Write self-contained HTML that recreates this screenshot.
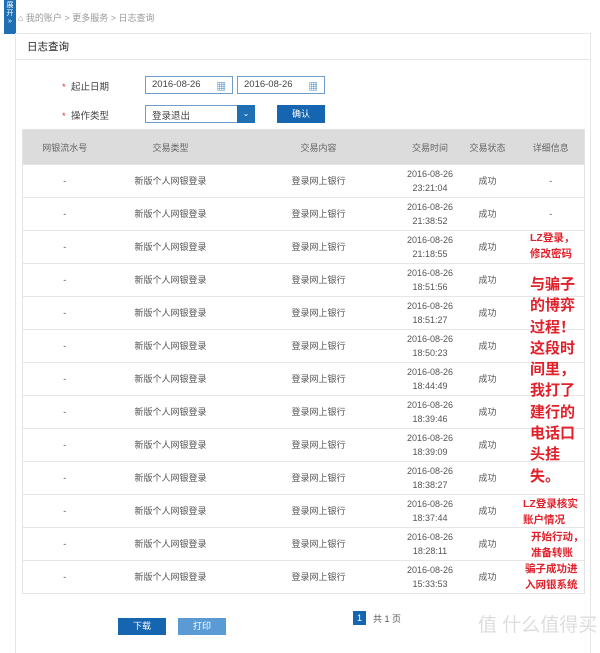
<!DOCTYPE html>
<html><head><meta charset="utf-8"><style>
*{margin:0;padding:0;box-sizing:border-box}
body{width:600px;height:641px;background:#fff;font-family:"Liberation Sans","Noto Sans CJK SC",sans-serif;font-size:9px;color:#555;position:relative;overflow:hidden}
.a{position:absolute}
.tab{left:4px;top:0;width:12px;height:34px;background:#1f6fb5;color:#fff;font-size:7px;line-height:8px;text-align:center;padding-top:2px}
.panel{left:15px;top:33px;width:576px;height:620px;border-left:1px solid #e6e6e6;border-right:1px solid #e6e6e6;border-top:1px solid #e6e6e6}
table{position:absolute;left:22px;top:129px;width:563px;border-collapse:collapse;border:1px solid #e3e3e3}
th{background:#dcdcdc;height:35px;font-weight:normal;color:#666;font-size:9px}
td{height:33px;border-top:1px solid #e6e6e6;text-align:center;font-size:9px;color:#555;line-height:14px}
.inp{border:1px solid #6f9cc8;height:18px;background:#fff;font-size:9.5px;padding:2px 6px;color:#444}
.btn{color:#fff;text-align:center;font-size:9px}
.r{color:#e0202a;font-weight:bold;position:absolute;font-size:10.5px;line-height:16px}
.big{font-size:15px;line-height:21.3px;left:530px;top:274px}
</style></head><body>
<div class="a tab">展<br>开<br>»</div>
<div class="a panel"></div>
<div class="a" style="left:18px;top:11px;font-size:9px;color:#999">⌂ 我的账户 &gt; 更多服务 &gt; 日志查询</div>
<div class="a" style="left:16px;top:59px;width:574px;border-top:1px solid #e6e6e6"></div>
<div class="a" style="left:27px;top:39px;font-size:10.5px;color:#222">日志查询</div>
<div class="a" style="left:62px;top:79px;font-size:9.5px;color:#444"><span style="color:#d33">*</span>&nbsp; 起止日期</div>
<div class="a" style="left:62px;top:108px;font-size:9.5px;color:#444"><span style="color:#d33">*</span>&nbsp; 操作类型</div>
<div class="a inp" style="left:145px;top:76px;width:88px">2016-08-26 <span style="color:#1f6fb5;float:right">▦</span></div>
<div class="a inp" style="left:237px;top:76px;width:88px">2016-08-26 <span style="color:#1f6fb5;float:right">▦</span></div>
<div class="a inp" style="left:145px;top:105px;width:110px">登录退出</div>
<div class="a btn" style="left:237px;top:105px;width:18px;height:18px;background:#1f6fb5;line-height:18px;font-size:8px">⌄</div>
<div class="a btn" style="left:277px;top:105px;width:48px;height:18px;background:#1565b0;line-height:18px">确认</div>
<table>
<tr><th style="width:84px">网银流水号</th><th style="width:128px">交易类型</th><th style="width:168px">交易内容</th><th style="width:55px">交易时间</th><th style="width:60px">交易状态</th><th>详细信息</th></tr>
<tr><td>-</td><td>新版个人网银登录</td><td>登录网上银行</td><td>2016-08-26<br>23:21:04</td><td>成功</td><td>-</td></tr>
<tr><td>-</td><td>新版个人网银登录</td><td>登录网上银行</td><td>2016-08-26<br>21:38:52</td><td>成功</td><td>-</td></tr>
<tr><td>-</td><td>新版个人网银登录</td><td>登录网上银行</td><td>2016-08-26<br>21:18:55</td><td>成功</td><td></td></tr>
<tr><td>-</td><td>新版个人网银登录</td><td>登录网上银行</td><td>2016-08-26<br>18:51:56</td><td>成功</td><td></td></tr>
<tr><td>-</td><td>新版个人网银登录</td><td>登录网上银行</td><td>2016-08-26<br>18:51:27</td><td>成功</td><td></td></tr>
<tr><td>-</td><td>新版个人网银登录</td><td>登录网上银行</td><td>2016-08-26<br>18:50:23</td><td>成功</td><td></td></tr>
<tr><td>-</td><td>新版个人网银登录</td><td>登录网上银行</td><td>2016-08-26<br>18:44:49</td><td>成功</td><td></td></tr>
<tr><td>-</td><td>新版个人网银登录</td><td>登录网上银行</td><td>2016-08-26<br>18:39:46</td><td>成功</td><td></td></tr>
<tr><td>-</td><td>新版个人网银登录</td><td>登录网上银行</td><td>2016-08-26<br>18:39:09</td><td>成功</td><td></td></tr>
<tr><td>-</td><td>新版个人网银登录</td><td>登录网上银行</td><td>2016-08-26<br>18:38:27</td><td>成功</td><td></td></tr>
<tr><td>-</td><td>新版个人网银登录</td><td>登录网上银行</td><td>2016-08-26<br>18:37:44</td><td>成功</td><td></td></tr>
<tr><td>-</td><td>新版个人网银登录</td><td>登录网上银行</td><td>2016-08-26<br>18:28:11</td><td>成功</td><td></td></tr>
<tr><td>-</td><td>新版个人网银登录</td><td>登录网上银行</td><td>2016-08-26<br>15:33:53</td><td>成功</td><td></td></tr>
</table>
<div class="r" style="left:530px;top:230px">LZ登录，<br>修改密码</div>
<div class="r big">与骗子<br>的博弈<br>过程！<br>这段时<br>间里，<br>我打了<br>建行的<br>电话口<br>头挂<br>失。</div>
<div class="r" style="left:523px;top:496px">LZ登录核实<br>账户情况</div>
<div class="r" style="left:531px;top:529px">开始行动，<br>准备转账</div>
<div class="r" style="left:525px;top:561px">骗子成功进<br>入网银系统</div>
<div class="a btn" style="left:118px;top:618px;width:48px;height:17px;background:#1565b0;line-height:17px">下载</div>
<div class="a btn" style="left:178px;top:618px;width:48px;height:17px;background:#5a9bd5;line-height:17px">打印</div>
<div class="a btn" style="left:353px;top:611px;width:13px;height:14px;background:#1565b0;line-height:14px">1</div>
<div class="a" style="left:373px;top:612px;font-size:9px;color:#555">共 1 页</div>
<div class="a" style="left:478px;top:610px;font-size:19px;color:#ddd">值 什么值得买</div>
</body></html>
